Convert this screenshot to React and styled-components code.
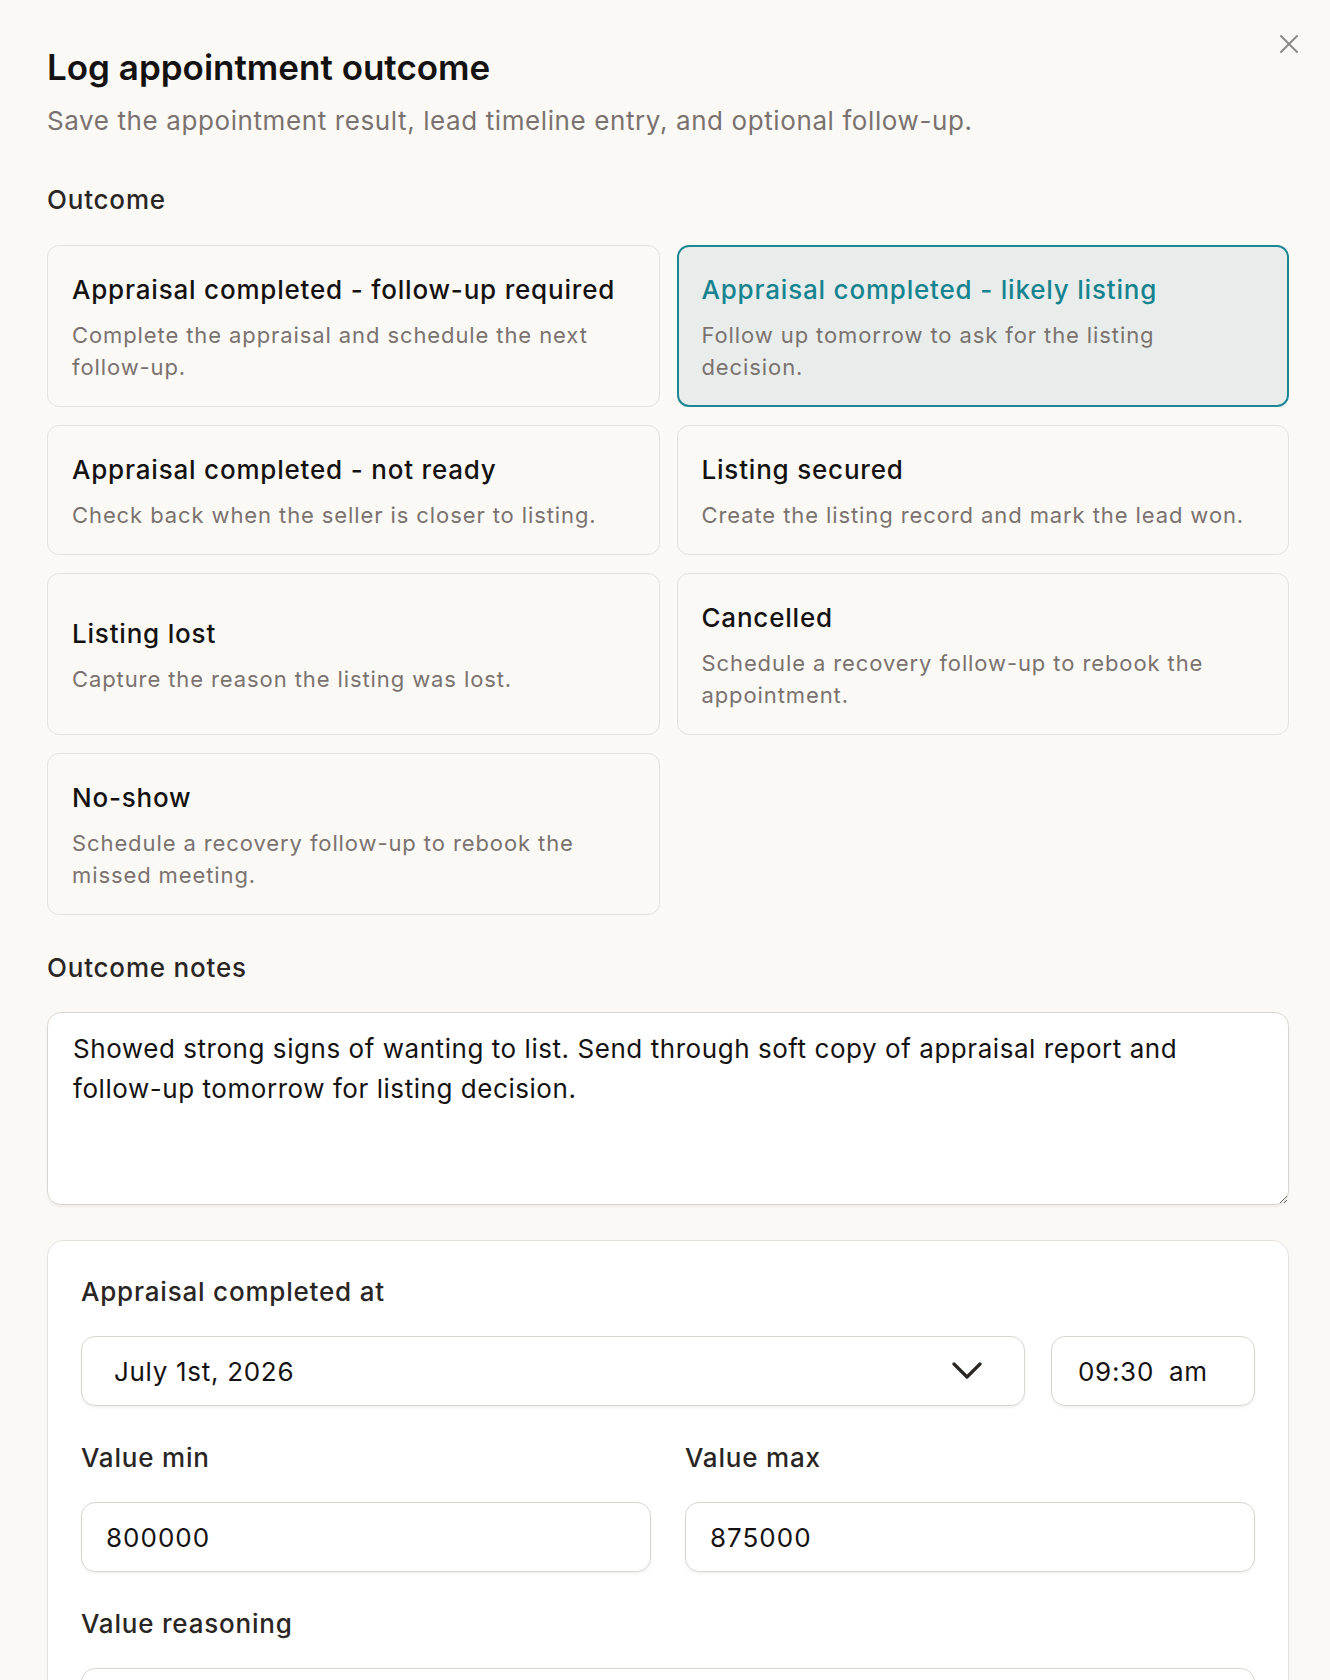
import React from "react";
import styled, { createGlobalStyle } from "styled-components";

const Global = createGlobalStyle`
  * { box-sizing: border-box; }
  html, body { margin: 0; padding: 0; background: #faf9f6; }
  body { font-family: Inter, "Noto Sans", "Liberation Sans", sans-serif; color: #1c1a19; }
`;

const Dialog = styled.div`
  position: relative;
  width: 1330px;
  height: 1680px;
  overflow: hidden;
  background: #faf9f6;
  padding: 47px 41px 0 47px;
`;

const CloseButton = styled.button`
  position: absolute;
  top: 34px;
  right: 31px;
  width: 20px;
  height: 20px;
  padding: 0;
  border: 0;
  background: transparent;
  color: #8d8a87;
  display: flex;
  align-items: center;
  justify-content: center;
`;

const Title = styled.h1`
  margin: 0;
  font-size: 35px;
  line-height: 40px;
  font-weight: 600;
  color: #141211;
`;

const Subtitle = styled.p`
  margin: 18px 0 0;
  font-size: 26px;
  line-height: 32px;
  letter-spacing: 0.6px;
  color: #7a726f;
`;

const SectionLabel = styled.div`
  margin-top: ${(p) => p.$top || 0}px;
  font-size: 26px;
  line-height: 32px;
  font-weight: 500;
  letter-spacing: 0.8px;
  color: #2a2624;
`;

const OutcomeGrid = styled.div`
  margin-top: 29px;
  display: grid;
  grid-template-columns: 1fr 1fr;
  gap: 18px 17px;
`;

const OutcomeCard = styled.button`
  display: flex;
  flex-direction: column;
  justify-content: center;
  gap: 11px;
  text-align: left;
  font-family: inherit;
  padding: ${(p) => (p.$selected ? "25px 37px 22px 23px" : "26px 38px 23px 24px")};
  border-radius: 12px;
  border: ${(p) => (p.$selected ? "2px solid #1b8792" : "1px solid #e4e1dc")};
  background: ${(p) => (p.$selected ? "#e8edec" : "#faf9f6")};
  min-height: 130px;
`;

const CardTitle = styled.span`
  font-size: 26px;
  line-height: 36px;
  font-weight: 500;
  letter-spacing: 0.8px;
  white-space: nowrap;
  color: ${(p) => (p.$selected ? "#17838e" : "#141211")};
`;

const CardDesc = styled.span`
  font-size: 22px;
  line-height: 32px;
  letter-spacing: 0.9px;
  color: #7a726f;
`;

const NotesArea = styled.textarea`
  display: block;
  margin-top: 28px;
  width: 100%;
  height: 193px;
  padding: 16px 25px;
  font-family: inherit;
  font-size: 26px;
  line-height: 40px;
  letter-spacing: 0.55px;
  color: #151312;
  background: #fff;
  border: 1.5px solid #d9d6d1;
  border-radius: 14px;
  box-shadow: 0 2px 3px rgba(0, 0, 0, 0.05);
  resize: vertical;
  outline: none;
`;

const Panel = styled.section`
  margin-top: 35px;
  background: #fff;
  border: 1.5px solid #e6e3de;
  border-radius: 16px;
  padding: 35px 33px 40px;
  display: flex;
  flex-direction: column;
  gap: 36px;
`;

const Field = styled.div`
  display: flex;
  flex-direction: column;
  gap: 28px;
  min-width: 0;
`;

const FieldLabel = styled.label`
  font-size: 26px;
  line-height: 32px;
  font-weight: 500;
  letter-spacing: 0.8px;
  color: #2a2624;
`;

const DateRow = styled.div`
  display: flex;
  gap: 26px;
`;

const Control = styled.div`
  height: 70px;
  display: flex;
  align-items: center;
  background: #fff;
  border: 1.5px solid #d9d6d1;
  border-radius: 14px;
  box-shadow: 0 2px 3px rgba(0, 0, 0, 0.05);
  font-size: 26px;
  letter-spacing: 0.7px;
  color: #151312;
`;

const DateSelect = styled(Control)`
  flex: 1;
  justify-content: space-between;
  padding: 0 42px 0 32px;
`;

const TimeBox = styled(Control)`
  width: 204px;
  padding: 0 26px;
  word-spacing: 7px;
`;

const TwoCol = styled.div`
  display: grid;
  grid-template-columns: 1fr 1fr;
  gap: 34px;
`;

const TextInput = styled.input`
  height: 70px;
  width: 100%;
  padding: 0 24px;
  font-family: inherit;
  font-size: 26px;
  letter-spacing: 1px;
  color: #151312;
  background: #fff;
  border: 1.5px solid #d9d6d1;
  border-radius: 14px;
  box-shadow: 0 2px 3px rgba(0, 0, 0, 0.05);
  outline: none;
`;

const outcomes = [
  { title: "Appraisal completed - follow-up required", desc: "Complete the appraisal and schedule the next follow-up." },
  { title: "Appraisal completed - likely listing", desc: "Follow up tomorrow to ask for the listing decision.", selected: true },
  { title: "Appraisal completed - not ready", desc: "Check back when the seller is closer to listing." },
  { title: "Listing secured", desc: "Create the listing record and mark the lead won." },
  { title: "Listing lost", desc: "Capture the reason the listing was lost." },
  { title: "Cancelled", desc: "Schedule a recovery follow-up to rebook the appointment." },
  { title: "No-show", desc: "Schedule a recovery follow-up to rebook the missed meeting." },
];

export default function App() {
  return (
    <>
      <Global />
      <Dialog>
        <CloseButton aria-label="Close">
          <svg width="20" height="20" viewBox="0 0 20 20" fill="none" stroke="currentColor" strokeWidth="2" strokeLinecap="round">
            <path d="M2 2 L18 18 M18 2 L2 18" />
          </svg>
        </CloseButton>
        <Title>Log appointment outcome</Title>
        <Subtitle>Save the appointment result, lead timeline entry, and optional follow-up.</Subtitle>

        <SectionLabel $top={47}>Outcome</SectionLabel>
        <OutcomeGrid>
          {outcomes.map((o) => (
            <OutcomeCard key={o.title} $selected={o.selected}>
              <CardTitle $selected={o.selected}>{o.title}</CardTitle>
              <CardDesc>{o.desc}</CardDesc>
            </OutcomeCard>
          ))}
        </OutcomeGrid>

        <SectionLabel $top={37}>Outcome notes</SectionLabel>
        <NotesArea defaultValue="Showed strong signs of wanting to list. Send through soft copy of appraisal report and follow-up tomorrow for listing decision." />

        <Panel>
          <Field>
            <FieldLabel>Appraisal completed at</FieldLabel>
            <DateRow>
              <DateSelect>
                <span>July 1st, 2026</span>
                <svg width="30" height="18" viewBox="0 0 30 18" fill="none" stroke="#2a2624" strokeWidth="3.2" strokeLinecap="round" strokeLinejoin="round">
                  <path d="M2 2 L15 15 L28 2" />
                </svg>
              </DateSelect>
              <TimeBox>09:30 am</TimeBox>
            </DateRow>
          </Field>
          <TwoCol>
            <Field>
              <FieldLabel>Value min</FieldLabel>
              <TextInput defaultValue="800000" />
            </Field>
            <Field>
              <FieldLabel>Value max</FieldLabel>
              <TextInput defaultValue="875000" />
            </Field>
          </TwoCol>
          <Field>
            <FieldLabel>Value reasoning</FieldLabel>
            <TextInput defaultValue="" />
          </Field>
        </Panel>
      </Dialog>
    </>
  );
}
